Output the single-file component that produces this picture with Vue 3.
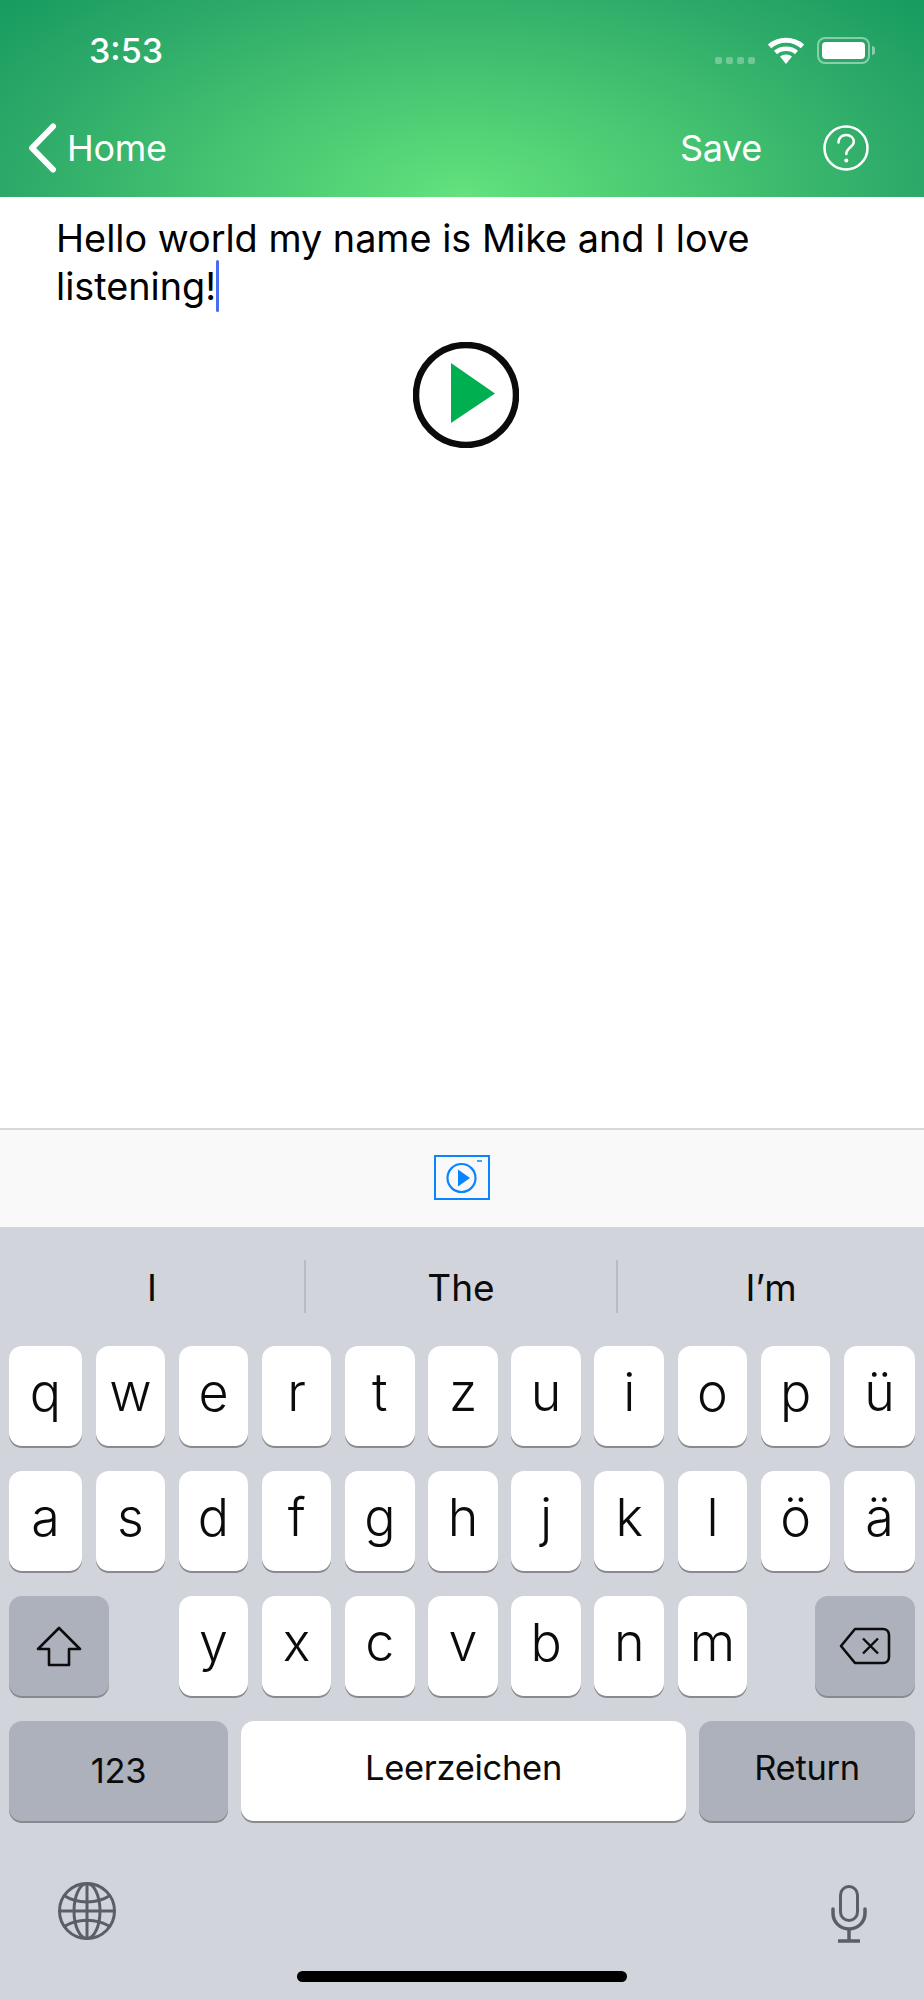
<script setup>
const row1 = ['q', 'w', 'e', 'r', 't', 'z', 'u', 'i', 'o', 'p', 'ü']
const row2 = ['a', 's', 'd', 'f', 'g', 'h', 'j', 'k', 'l', 'ö', 'ä']
const row3 = ['y', 'x', 'c', 'v', 'b', 'n', 'm']
const predictions = ['I', 'The', 'I’m']
</script>

<template>
  <div class="phone">
    <header class="header">
      <div class="status">
        <span class="time">3:53</span>
        <div class="status-icons">
          <div class="signal"><i></i><i></i><i></i><i></i></div>
          <svg class="wifi" width="36" height="27" viewBox="0 0 36 27">
            <path d="M1.5 9.5C10.5 1.2 25.5 1.2 34.500 9.500" fill="none" stroke="#fff" stroke-width="5" />
            <path d="M7.500 15.500C13 10.500 23 10.500 28.500 15.500" fill="none" stroke="#fff" stroke-width="4.500" />
            <path d="M12 19.500C15.500 16.800 20.500 16.800 24 19.500L18 27Z" fill="#fff" />
          </svg>
          <div class="battery"><div class="battery-fill"></div></div>
          <div class="battery-nub"></div>
        </div>
      </div>
      <nav class="nav">
        <div class="back">
          <svg width="30" height="50" viewBox="0 0 30 50">
            <path d="M26 3.500L5 25L26 46.500" fill="none" stroke="#fff" stroke-width="6" stroke-linecap="round" stroke-linejoin="round" />
          </svg>
          <span>Home</span>
        </div>
        <div class="nav-right">
          <span>Save</span>
          <svg width="46" height="46" viewBox="0 0 46 46">
            <circle cx="23" cy="23" r="21.500" fill="none" stroke="#fff" stroke-width="2.500" />
            <path d="M15.500 17.500C15.500 12.800 19 10 23.200 10C27.500 10 30.800 12.800 30.800 16.800C30.800 22 23.300 22.800 23.300 29" fill="none" stroke="#fff" stroke-width="2.500" stroke-linecap="round" />
            <circle cx="23.300" cy="35.500" r="2" fill="#fff" />
          </svg>
        </div>
      </nav>
    </header>

    <main class="editor">
      <p class="text">Hello world my name is Mike and I love<br />listening!<span class="caret"></span></p>
      <svg class="play" width="106" height="106" viewBox="0 0 106 106">
        <circle cx="53" cy="53" r="50" fill="#fff" stroke="#0b0b0b" stroke-width="6.500" />
        <path d="M38 21L82 51.500L38 81Z" fill="#00b050" />
      </svg>
    </main>

    <div class="toolbar">
      <svg width="56" height="45" viewBox="0 0 56 45">
        <rect x="1" y="1" width="54" height="43" fill="none" stroke="#0a84ff" stroke-width="2" />
        <path d="M43 6H48" stroke="#0a84ff" stroke-width="1.500" />
        <circle cx="27.500" cy="23" r="14" fill="none" stroke="#0a84ff" stroke-width="2.200" />
        <path d="M24 14.500L36 23L24 31.500Z" fill="#0a84ff" />
      </svg>
    </div>

    <section class="keyboard">
      <div class="predictions">
        <span v-for="word in predictions" :key="word" class="prediction">{{ word }}</span>
      </div>
      <div class="keys">
        <div class="letter-row">
          <div v-for="k in row1" :key="k" class="key">{{ k }}</div>
        </div>
        <div class="letter-row">
          <div v-for="k in row2" :key="k" class="key">{{ k }}</div>
        </div>
        <div class="letter-row">
          <div class="key dark shift">
            <svg width="46" height="41" viewBox="0 0 46 41">
              <path d="M23 2L44 23H33V39H13V23H2Z" fill="none" stroke="#0c0c0c" stroke-width="2.600" stroke-linejoin="round" />
            </svg>
          </div>
          <div v-for="k in row3" :key="k" class="key">{{ k }}</div>
          <div class="key dark backspace">
            <svg width="52" height="38" viewBox="0 0 52 38">
              <path d="M16 2H44C47.500 2 50 4.500 50 8V30C50 33.500 47.500 36 44 36H16L2 19Z" fill="none" stroke="#0c0c0c" stroke-width="2.600" stroke-linejoin="round" />
              <path d="M24 11.500L39 26.500M39 11.500L24 26.500" stroke="#0c0c0c" stroke-width="2.400" />
            </svg>
          </div>
        </div>
        <div class="bottom-row">
          <div class="key dark word num">123</div>
          <div class="key word">Leerzeichen</div>
          <div class="key dark word">Return</div>
        </div>
      </div>
      <div class="system-row">
        <svg width="60" height="60" viewBox="0 0 60 60" fill="none" stroke="#5a5f67" stroke-width="3">
          <circle cx="30" cy="30" r="27.500" />
          <ellipse cx="30" cy="30" rx="13" ry="27.500" />
          <path d="M30 2.500V57.500M2.500 30H57.500" />
          <path d="M7 14.500C20 23 40 23 53 14.500M7 45.500C20 37 40 37 53 45.500" />
        </svg>
        <svg class="mic" width="36" height="58" viewBox="0 0 36 58" fill="none" stroke="#5a5f67" stroke-width="3">
          <rect x="9.500" y="1.500" width="17" height="34" rx="8.500" />
          <path d="M2 24V28C2 37 9 44 18 44C27 44 34 37 34 28V24" stroke-width="3.500" stroke-linecap="round" />
          <path d="M18 44V55M7 56H29" stroke-width="3.500" />
        </svg>
      </div>
      <div class="home-indicator"></div>
    </section>
  </div>
</template>

<style scoped>
.phone {
  width: 924px;
  height: 2000px;
  display: flex;
  flex-direction: column;
  font-family: Inter, "Liberation Sans", sans-serif;
  background: #fff;
  overflow: hidden;
}

.header {
  height: 197px;
  flex-shrink: 0;
  color: #fff;
  background: radial-gradient(ellipse 610px 300px at 462px 197px, #63e27e 0%, #46c471 40%, #2eab69 72%, #179b60 100%);
  background-color: #179b60;
}

.status {
  height: 111px;
  padding: 31px 49px 0 89px;
  box-sizing: border-box;
  display: flex;
  justify-content: space-between;
}

.time {
  font-size: 34px;
  font-weight: 500;
  line-height: 40px;
}

.status-icons {
  display: flex;
  align-items: flex-start;
  padding-top: 6px;
}

.signal {
  display: flex;
  gap: 4px;
  margin: 20px 13px 0 0;
}

.signal i {
  width: 7px;
  height: 7px;
  border-radius: 2px;
  background: rgba(255, 255, 255, 0.3);
}

.wifi {
  margin-right: 13px;
}

.battery {
  width: 53px;
  height: 27px;
  box-sizing: border-box;
  border: 2px solid rgba(255, 255, 255, 0.45);
  border-radius: 8px;
  padding: 3px;
}

.battery-fill {
  height: 100%;
  border-radius: 4px;
  background: #fff;
}

.battery-nub {
  width: 3px;
  height: 9px;
  margin: 9px 0 0 2px;
  border-radius: 0 3px 3px 0;
  background: rgba(255, 255, 255, 0.45);
}

.nav {
  height: 86px;
  display: flex;
  justify-content: space-between;
  padding: 12px 55px 0 27px;
  box-sizing: border-box;
  font-size: 36px;
  line-height: 46px;
  letter-spacing: -0.3px;
}

.back {
  display: flex;
  align-items: center;
  gap: 10px;
  height: 50px;
}

.nav-right {
  display: flex;
  align-items: center;
  gap: 61px;
  height: 50px;
}

.editor {
  flex: 1;
  padding: 0 56px;
  display: flex;
  flex-direction: column;
}

.text {
  margin: 18px 0 0;
  font-size: 37.800px;
  line-height: 47.500px;
  color: #000;
}

.caret {
  display: inline-block;
  width: 3px;
  height: 52px;
  margin: -12px 0 -8px 0;
  vertical-align: -4px;
  border-radius: 2px;
  background: #4a6cf0;
}

.play {
  margin: 32px 0 0 357px;
}

.toolbar {
  height: 99px;
  box-sizing: border-box;
  flex-shrink: 0;
  border-top: 2px solid #d8d8d8;
  background: #f9f9f9;
  display: flex;
  justify-content: center;
  padding-top: 25px;
}

.keyboard {
  height: 773px;
  flex-shrink: 0;
  position: relative;
  background: #d1d4db;
  color: #0b0b0b;
}

.predictions {
  height: 119px;
  box-sizing: border-box;
  padding-top: 33px;
  display: grid;
  grid-template-columns: 304px 312px 308px;
}

.prediction {
  height: 53px;
  font-size: 37px;
  line-height: 55px;
  text-align: center;
  border-left: 2px solid #b8bbc2;
}

.prediction:first-child {
  border-left: 0;
}

.keys {
  padding: 0 9px;
  display: flex;
  flex-direction: column;
  gap: 25px;
}

.letter-row {
  display: grid;
  grid-template-columns: 73px repeat(9, 1fr) 71px;
  column-gap: 13.500px;
}

.bottom-row {
  display: grid;
  grid-template-columns: 219px 1fr 216px;
  column-gap: 13px;
}

.key {
  height: 100px;
  border-radius: 13px;
  background: #fff;
  box-shadow: 0 2px 0 #898a8f;
  display: flex;
  align-items: center;
  justify-content: center;
  font-size: 52px;
  line-height: 1;
  padding-bottom: 6px;
  box-sizing: border-box;
  font-weight: 350;
}

.dark {
  background: #adb1bb;
  padding-bottom: 0;
}

.shift {
  grid-column: span 2;
  width: 100px;
}

.backspace {
  grid-column: span 2;
  width: 100px;
  justify-self: end;
}

.word {
  font-size: 34.500px;
  font-weight: 400;
  padding-bottom: 5px;
  letter-spacing: -0.3px;
}

.num {
  padding-top: 1px;
  padding-bottom: 0;
}

.system-row {
  display: flex;
  justify-content: space-between;
  padding: 60px 57px 0;
  align-items: flex-start;
}

.mic {
  margin-top: 4px;
}

.home-indicator {
  position: absolute;
  left: 297px;
  bottom: 18px;
  width: 330px;
  height: 11px;
  border-radius: 6px;
  background: #000;
}
</style>
